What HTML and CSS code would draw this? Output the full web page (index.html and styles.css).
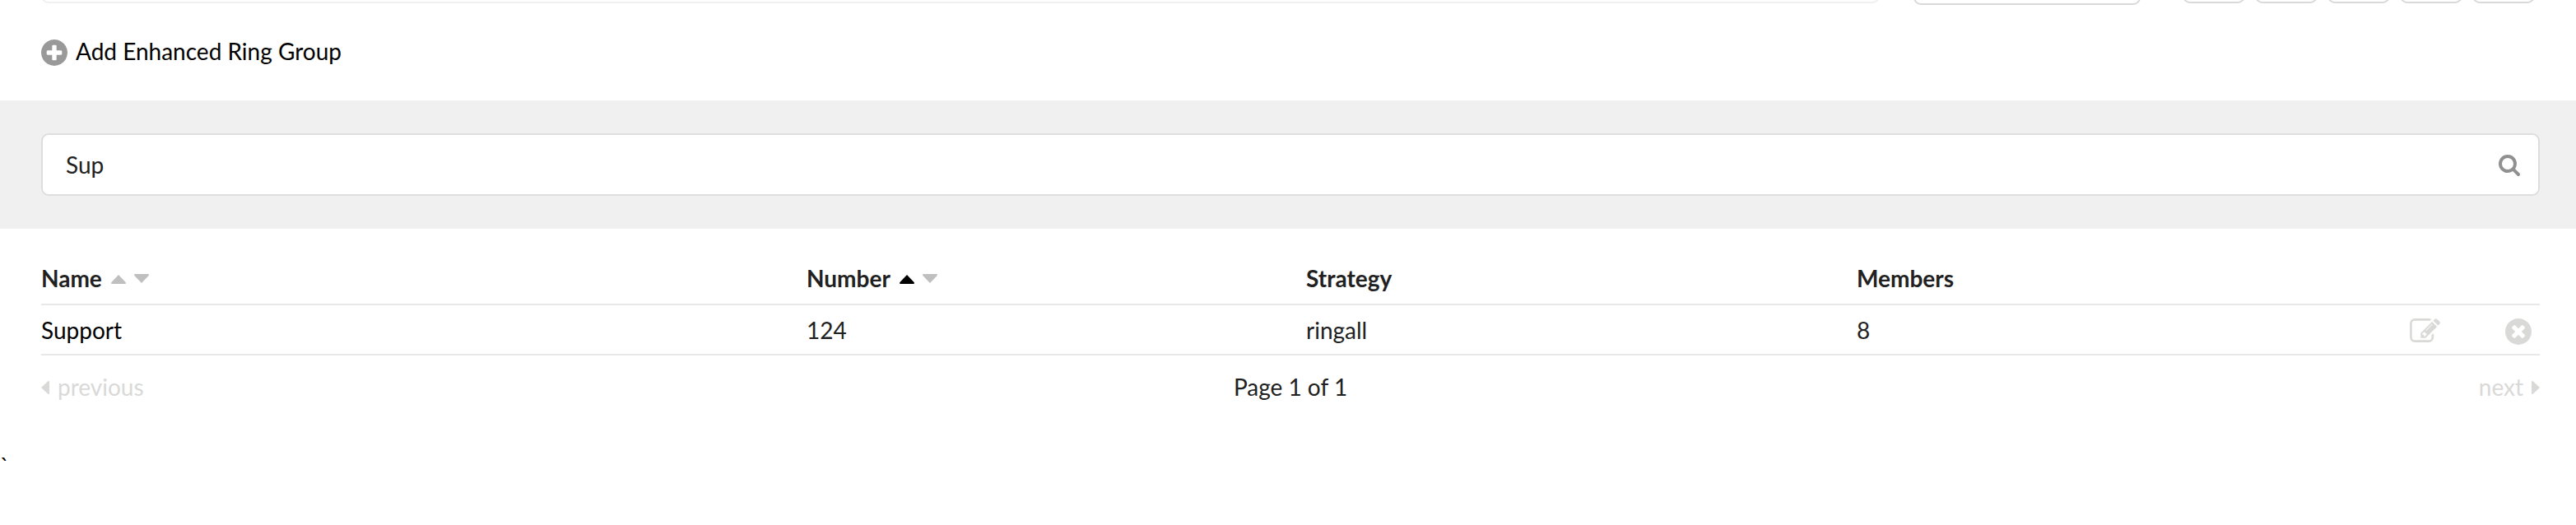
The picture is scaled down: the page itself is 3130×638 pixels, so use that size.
FILE: index.html
```html
<!DOCTYPE html>
<html lang="en">
<head>
<meta charset="UTF-8">
<meta name="viewport" content="width=device-width, initial-scale=1.0">
<title>Enhanced Ring Groups</title>
<link rel="stylesheet" href="styles.css">
</head>
<body>

<div class="toolbar">
<div class="toolbar-field"></div>
<div class="toolbar-select"></div>
<div class="toolbar-buttons">
<span class="toolbar-button"></span>
<span class="toolbar-button"></span>
<span class="toolbar-button"></span>
<span class="toolbar-button"></span>
<span class="toolbar-button"></span>
</div>
</div>

<a class="add-link">
<svg class="icon-add" viewBox="0 0 1536 1536"><path d="M1216 832V704q0-26-19-45t-45-19H896V384q0-26-19-45t-45-19H704q-26 0-45 19t-19 45v256H384q-26 0-45 19t-19 45v128q0 26 19 45t45 19h256v256q0 26 19 45t45 19h128q26 0 45-19t19-45V896h256q26 0 45-19t19-45zm320-64q0 209-103 385.500T1153.500 1433 768 1536t-385.500-103T103 1153.500 0 768t103-385.500T382.500 103 768 0t385.500 103T1433 382.500 1536 768z"/></svg>
<span class="add-text">Add Enhanced Ring Group</span>
</a>

<div class="search">
<div class="search-box">
<input class="search-input" type="text" value="Sup">
<svg class="icon-search" viewBox="0 0 1664 1664"><path d="M1152 704q0-185-131.500-316.500T704 256 387.500 387.500 256 704t131.500 316.500T704 1152t316.500-131.500T1152 704zm512 832q0 52-38 90t-90 38q-54 0-90-38l-343-342q-179 124-399 124-143 0-273.500-55.500t-225-150-150-225T0 704t55.500-273.500 150-225 225-150T704 0t273.500 55.500 225 150 150 225T1408 704q0 220-124 399l343 343q37 37 37 90z"/></svg>
</div>
</div>

<table class="groups">
<thead>
<tr>
<th class="col-name">
<div class="heading">Name
<svg class="caret up" viewBox="0 0 18 11"><path d="M9 0 17.600 9Q18.500 11 17 11H1Q-.5 11 .4 9z"/></svg>
<svg class="caret down" viewBox="0 0 18 11"><path d="M9 11 .4 2Q-.5 0 1 0h16q1.500 0 .6 2z"/></svg>
</div>
</th>
<th class="col-number">
<div class="heading">Number
<svg class="caret up active" viewBox="0 0 18 11"><path d="M9 0 17.600 9Q18.500 11 17 11H1Q-.5 11 .4 9z"/></svg>
<svg class="caret down" viewBox="0 0 18 11"><path d="M9 11 .4 2Q-.5 0 1 0h16q1.500 0 .6 2z"/></svg>
</div>
</th>
<th class="col-strategy"><div class="heading">Strategy</div></th>
<th class="col-members"><div class="heading">Members</div></th>
<th></th>
</tr>
</thead>
<tbody>
<tr>
<td><a class="group-link">Support</a></td>
<td>124</td>
<td>ringall</td>
<td>8</td>
<td>
<div class="actions">
<svg class="icon-edit" viewBox="0 0 1784 1408"><path d="M888 1056l116-116-152-152-116 116v56h96v96h56zm440-720q-16-16-33 1L945 687q-17 17-1 33t33-1l350-350q17-17 1-33zm80 594v190q0 119-84.500 203.500T1120 1408H288q-119 0-203.500-84.500T0 1120V288Q0 169 84.500 84.500T288 0h832q63 0 117 25 15 7 18 23 3 17-9 29l-49 49q-14 14-32 8-23-6-45-6H288q-66 0-113 47t-47 113v832q0 66 47 113t113 47h832q66 0 113-47t47-113V994q0-13 9-22l64-64q15-15 35-7t20 29zm-96-738l288 288-672 672H640V864zm444 132l-92 92-288-288 92-92q28-28 68-28t68 28l152 152q28 28 28 68t-28 68z"/></svg>
<svg class="icon-delete" viewBox="0 0 1536 1536"><path d="M1149 994q0-26-19-45L949 768l181-181q19-19 19-45 0-27-19-46l-90-90q-19-19-46-19-26 0-45 19L768 587 587 406q-19-19-45-19-27 0-46 19l-90 90q-19 19-19 46 0 26 19 45l181 181-181 181q-19 19-19 45 0 27 19 46l90 90q19 19 46 19 26 0 45-19l181-181 181 181q19 19 45 19 27 0 46-19l90-90q19-19 19-46zm387-226q0 209-103 385.500T1153.500 1433 768 1536t-385.500-103T103 1153.500 0 768t103-385.500T382.500 103 768 0t385.500 103T1433 382.500 1536 768z"/></svg>
</div>
</td>
</tr>
</tbody>
</table>

<div class="pager">
<span class="pager-link">
<svg class="arrow" viewBox="0 0 10 16"><path d="M0 8 8 .5Q10-.5 10 1v14q0 1.500-2 .5z"/></svg>
previous
</span>
<span class="pager-info">Page 1 of 1</span>
<span class="pager-link next">
next
<svg class="arrow" viewBox="0 0 10 16"><path d="M10 8 2 .5Q0-.5 0 1v14q0 1.500 2 .5z"/></svg>
</span>
</div>

<div class="stray">`</div>

</body>
</html>
```
FILE: styles.css
```css
* {
box-sizing: border-box;
}
body {
font-family: Lato, sans-serif;
font-size: 28px;
line-height: 40px;
background: #fff;
color: #212121;
margin: 0;
overflow: hidden;
}
svg {
display: block;
fill: currentColor;
flex: none;
}
/* only the bottom edge of the toolbar is visible */
.toolbar {
display: flex;
align-items: flex-start;
height: 6px;
padding: 0 50px;
overflow: hidden;
}
.toolbar-field {
width: 2234px;
height: 76px;
margin-top: -72px;
border: 2px solid #f0f0f0;
border-radius: 9px;
}
.toolbar-select {
width: 276px;
height: 76px;
margin: -70px 0 0 41px;
border: 2px solid #d9d9d9;
border-radius: 9px;
}
.toolbar-buttons {
display: flex;
gap: 12px;
margin: -72px 0 0 51px;
}
.toolbar-button {
width: 76px;
height: 76px;
border: 2px solid #d9d9d9;
border-radius: 9px;
}
.add-link {
display: flex;
align-items: center;
gap: 10px;
height: 116px;
padding: 0 50px 1px;
color: #000;
}
.add-text {
padding-bottom: 3px;
}
.icon-add {
width: 32px;
height: 32px;
color: #999;
}
.search {
height: 156px;
padding: 40px 44px 40px 50px;
background: #f0f0f0;
}
.search-box {
display: flex;
align-items: center;
height: 76px;
padding: 0 22px 0 28px;
background: #fff;
border: 2px solid #dedede;
border-radius: 9px;
}
.search-input {
flex: 1;
padding: 0;
border: 0;
outline: 0;
font: inherit;
color: #212121;
}
.icon-search {
width: 26px;
height: 26px;
margin-top: 2px;
color: #909090;
}
.groups {
width: 3036px;
margin: 31px 0 0 50px;
border-collapse: separate;
border-spacing: 0;
table-layout: fixed;
}
.groups th,
.groups td {
height: 61px;
padding: 0;
text-align: left;
border-bottom: 2px solid #e8e8e8;
}
.groups th {
height: 62px;
padding-bottom: 2px;
font-weight: bold;
}
.col-name {
width: 930px;
}
.col-number {
width: 607px;
}
.col-strategy {
width: 669px;
}
.col-members {
width: 654px;
}
.group-link {
color: #000;
}
.heading {
display: flex;
align-items: center;
}
.caret {
width: 18px;
height: 11px;
color: #bfbfbf;
}
.caret.up {
margin: 2px 0 0 11px;
}
.caret.down {
margin-left: 10px;
}
.caret.active {
color: #000;
}
.actions {
display: flex;
align-items: center;
justify-content: flex-end;
gap: 79px;
padding: 4px 10px 0 0;
color: #d9d9d8;
}
.icon-edit {
width: 37px;
height: 29px;
margin-bottom: 3px;
}
.icon-delete {
width: 32px;
height: 32px;
}
.pager {
display: grid;
grid-template-columns: 1fr auto 1fr;
padding: 18px 44px 0 50px;
}
.pager-link {
display: flex;
align-items: center;
gap: 10px;
color: #d9d9d8;
}
.pager-link.next {
justify-content: flex-end;
}
.arrow {
width: 10px;
height: 16px;
margin-top: 2px;
}
.stray {
margin-top: 56px;
color: #000;
}
```
